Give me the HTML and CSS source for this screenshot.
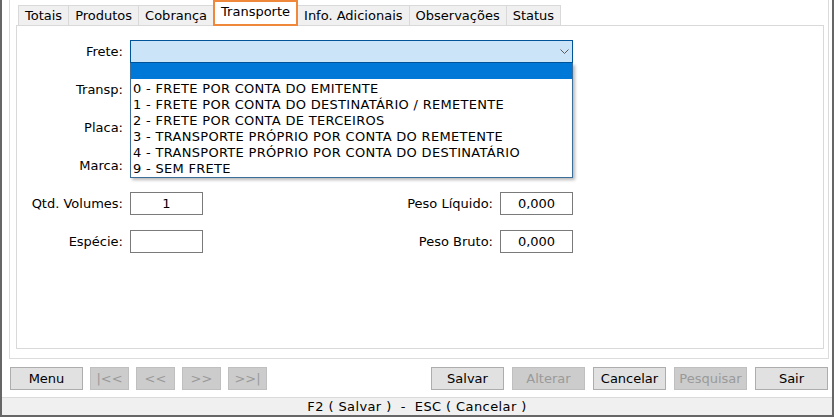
FILE: index.html
```html
<!DOCTYPE html>
<html lang="pt-BR">
<head>
<meta charset="utf-8">
<title>Transporte</title>
<link rel="stylesheet" href="styles.css">
</head>
<body>
<div class="window">
  <div class="panel">
    <div class="tabs">
      <div class="tab">Totais</div>
      <div class="tab">Produtos</div>
      <div class="tab">Cobrança</div>
      <div class="tab active">Transporte</div>
      <div class="tab">Info. Adicionais</div>
      <div class="tab">Observações</div>
      <div class="tab">Status</div>
    </div>
    <div class="page">
      <div class="form">
        <div class="lbl">Frete:</div>
        <div class="combo span3">
          <div class="select">
            <svg class="chev" width="9" height="5" viewBox="0 0 9 5"><polyline points="0.5,0.5 4.5,4.5 8.5,0.5" fill="none" stroke="#5a5a5a" stroke-width="1"/></svg>
          </div>
          <div class="droplist">
            <div class="hl"></div>
            <ul class="items">
              <li>0 - FRETE POR CONTA DO EMITENTE</li>
              <li>1 - FRETE POR CONTA DO DESTINATÁRIO / REMETENTE</li>
              <li>2 - FRETE POR CONTA DE TERCEIROS</li>
              <li>3 - TRANSPORTE PRÓPRIO POR CONTA DO REMETENTE</li>
              <li>4 - TRANSPORTE PRÓPRIO POR CONTA DO DESTINATÁRIO</li>
              <li>9 - SEM FRETE</li>
            </ul>
          </div>
        </div>
        <div class="lbl">Transp:</div>
        <div class="field span3"></div>
        <div class="lbl">Placa:</div>
        <div class="field"></div>
        <div class="gap2"></div>
        <div class="lbl">Marca:</div>
        <div class="field"></div>
        <div class="gap2"></div>
        <div class="lbl">Qtd. Volumes:</div>
        <div class="field">1</div>
        <div class="lbl">Peso Líquido:</div>
        <div class="field">0,000</div>
        <div class="lbl">Espécie:</div>
        <div class="field"></div>
        <div class="lbl">Peso Bruto:</div>
        <div class="field">0,000</div>
      </div>
    </div>
  </div>
  <div class="buttons">
    <div class="group left">
      <div class="btn wide">Menu</div>
      <div class="btn nav disabled">|&lt;&lt;</div>
      <div class="btn nav disabled">&lt;&lt;</div>
      <div class="btn nav disabled">&gt;&gt;</div>
      <div class="btn nav disabled">&gt;&gt;|</div>
    </div>
    <div class="group right">
      <div class="btn wide">Salvar</div>
      <div class="btn wide disabled">Alterar</div>
      <div class="btn wide">Cancelar</div>
      <div class="btn wide disabled">Pesquisar</div>
      <div class="btn wide">Sair</div>
    </div>
  </div>
  <div class="status">F2 ( Salvar )  -  ESC ( Cancelar )</div>
</div>
</body>
</html>
```

FILE: styles.css
```css
* { box-sizing: border-box; }
html, body {
  margin: 0;
  padding: 0;
  background: #ffffff;
}
body {
  width: 834px;
  height: 417px;
  overflow: hidden;
  font-family: "DejaVu Sans", Verdana, sans-serif;
  font-size: 13px;
  color: #000;
}
.window {
  width: 834px;
  height: 417px;
  border-left: 2px solid #666666;
  border-right: 2px solid #666666;
  border-bottom: 2px solid #666666;
  display: flex;
  flex-direction: column;
  background: #ffffff;
}
.panel {
  height: 359px;
  margin: 0 3px 0 7px;
  border-left: 1px solid #dcdcdc;
  border-right: 1px solid #dcdcdc;
  border-bottom: 1px solid #dcdcdc;
  padding: 1px 4px 9px 6px;
  display: flex;
  flex-direction: column;
}
.tabs {
  display: flex;
  align-items: flex-end;
  height: 24px;
  padding-left: 2px;
}
.tab {
  height: 20px;
  line-height: 19px;
  padding: 0 6px;
  background: #f0f0f0;
  border: 1px solid #d9d9d9;
  border-bottom: none;
  margin-left: -1px;
  white-space: nowrap;
}
.tab:first-child { margin-left: 0; }
.tab.active {
  height: 26px;
  line-height: 20px;
  margin-bottom: -1px;
  background: #ffffff;
  border: 2px solid #f0883c;
  padding: 0 6px;
  position: relative;
  z-index: 2;
}
.page {
  flex: 1;
  border: 1px solid #d9d9d9;
  background: #ffffff;
  padding-top: 14px;
}
.form {
  display: grid;
  grid-template-columns: 106px 73px 283px 73px;
  grid-auto-rows: 23px;
  column-gap: 7px;
  row-gap: 15px;
}
.lbl {
  text-align: right;
  align-self: center;
  white-space: nowrap;
}
.span3 { grid-column: span 3; }
.gap2 { grid-column: span 2; }
.field {
  border: 1px solid #7a7a7a;
  background: #fff;
  text-align: center;
  line-height: 21px;
}
.combo {
  position: relative;
  z-index: 5;
}
.select {
  height: 23px;
  border: 1px solid #005499;
  background: #cce4f7;
  display: flex;
  align-items: center;
  justify-content: flex-end;
  padding-right: 3px;
}
.chev { display: block; }
.droplist {
  position: absolute;
  top: 23px;
  left: 0;
  right: 0;
  background: #ffffff;
  border-left: 1px solid #3d6e99;
  border-right: 1px solid #3d6e99;
  border-bottom: 1px solid #3d6e99;
  box-shadow: 2px 2px 3px rgba(0, 0, 0, 0.28);
}
.hl {
  height: 16px;
  background: #0078d7;
}
.items {
  list-style: none;
  margin: 0;
  padding: 2px 0 0 2px;
}
.items li {
  height: 16px;
  line-height: 16px;
  white-space: nowrap;
  letter-spacing: 0.3px;
}
.buttons {
  margin-top: 8px;
  height: 23px;
  display: flex;
  justify-content: space-between;
  padding: 0 4px 0 8px;
}
.group {
  display: flex;
}
.group.left { gap: 7px; }
.group.right { gap: 8px; }
.btn {
  height: 23px;
  line-height: 21px;
  text-align: center;
  background: #e1e1e1;
  border: 1px solid #adadad;
  white-space: nowrap;
}
.btn.wide { width: 73px; }
.btn.nav { width: 39px; }
.btn.disabled {
  background: #cccccc;
  border-color: #bfbfbf;
  color: #9a9a9a;
}
.status {
  margin-top: auto;
  height: 18px;
  background: #f0f0f0;
  border-top: 1px solid #dadada;
  text-align: center;
  line-height: 17px;
  white-space: pre;
  letter-spacing: 0.4px;
}
```
